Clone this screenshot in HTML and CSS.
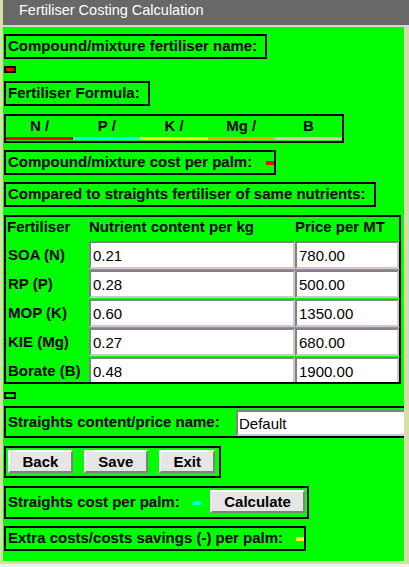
FILE: index.html
```html
<!DOCTYPE html>
<html lang="en">
<head>
<meta charset="utf-8">
<title>Fertiliser Costing Calculation</title>
<link rel="stylesheet" href="styles.css">
</head>
<body>
<div class="app">
  <div class="titlebar">Fertiliser Costing Calculation</div>
  <div class="panel">
    <div class="label-box">Compound/mixture fertiliser name:</div>
    <div class="swatch swatch-red gap-7"></div>
    <div class="label-box gap-8">Fertiliser Formula:</div>
    <div class="formula gap-8">
      <div class="fcell"><div class="fsym">N /</div><div class="bar bar-n"></div></div>
      <div class="fcell"><div class="fsym">P /</div><div class="bar bar-p"></div></div>
      <div class="fcell"><div class="fsym">K /</div><div class="bar bar-k"></div></div>
      <div class="fcell"><div class="fsym">Mg /</div><div class="bar bar-mg"></div></div>
      <div class="fcell"><div class="fsym">B</div><div class="bar bar-b"></div></div>
    </div>
    <div class="label-box with-dash gap-7">Compound/mixture cost per palm:<span class="dash dash-red"></span></div>
    <div class="label-box gap-7">Compared to straights fertiliser of same nutrients:</div>
    <div class="price-table gap-8">
      <div class="th th-first">Fertiliser</div>
      <div class="th">Nutrient content per kg</div>
      <div class="th">Price per MT</div>

      <div class="row-label">SOA (N)</div>
      <input class="num-input" type="text" value="0.21">
      <input class="num-input" type="text" value="780.00">

      <div class="row-label">RP (P)</div>
      <input class="num-input" type="text" value="0.28">
      <input class="num-input" type="text" value="500.00">

      <div class="row-label">MOP (K)</div>
      <input class="num-input" type="text" value="0.60">
      <input class="num-input" type="text" value="1350.00">

      <div class="row-label">KIE (Mg)</div>
      <input class="num-input" type="text" value="0.27">
      <input class="num-input" type="text" value="680.00">

      <div class="row-label">Borate (B)</div>
      <input class="num-input" type="text" value="0.48">
      <input class="num-input" type="text" value="1900.00">
    </div>
    <div class="swatch gap-8"></div>
    <div class="straights gap-7">
      <div class="straights-label">Straights content/price name:</div>
      <input class="name-input" type="text" value="Default">
    </div>
    <div class="actions gap-8">
      <button class="btn" type="button">Back</button>
      <button class="btn" type="button">Save</button>
      <button class="btn" type="button">Exit</button>
    </div>
    <div class="cost gap-8">
      <div class="cost-label">Straights cost per palm:<span class="dash dash-cyan"></span></div>
      <button class="btn btn-calc" type="button">Calculate</button>
    </div>
    <div class="label-box with-dash gap-7">Extra costs/costs savings (-) per palm:<span class="dash dash-yellow"></span></div>
  </div>
</div>
</body>
</html>
```
FILE: styles.css
```css
* {
  box-sizing: border-box;
}

html,
body {
  margin: 0;
  padding: 0;
}

body {
  background: #f1f1ea;
  font-family: "Liberation Sans", Arial, sans-serif;
  color: #000;
}

.app {
  width: 409px;
  background: #d5dfa6;
  padding: 0 0 3px 3px;
}

.titlebar {
  height: 27px;
  background: #686868;
  border-bottom: 2px solid #d6d6d6;
  color: #fff;
  font-size: 14.5px;
  line-height: 20px;
  padding-left: 16px;
  white-space: nowrap;
}

.panel {
  width: 401px;
  height: 534px;
  background: #00ff00;
  overflow: hidden;
  padding: 7px 0 0 1px;
  display: flex;
  flex-direction: column;
  align-items: flex-start;
}

.gap-7 {
  margin-top: 7px;
}

.gap-8 {
  margin-top: 8px;
}

.label-box {
  border: 2px solid #000;
  height: 25px;
  padding: 0 8px 2px 2px;
  font-weight: bold;
  font-size: 15px;
  line-height: 19px;
  white-space: nowrap;
}

.label-box.with-dash {
  padding-right: 0;
}

.dash {
  display: inline-block;
  width: 8px;
  height: 4px;
  margin-left: 13px;
  vertical-align: 2px;
}

.dash-red {
  background: #ff0000;
  margin-left: 14px;
}

.dash-cyan {
  background: #00ffff;
}

.dash-yellow {
  background: #ffff00;
}

.swatch {
  width: 12px;
  height: 7px;
  border: 2px solid #000;
}

.swatch-red {
  background: #ff0000;
}

.formula {
  border: 2px solid #000;
  height: 29px;
  display: grid;
  grid-template-columns: repeat(5, 67.2px);
}

.fsym {
  text-align: center;
  font-weight: bold;
  font-size: 15px;
  line-height: 20px;
  height: 20px;
}

.bar {
  height: 3px;
  margin-top: 1px;
}

.bar-n {
  background: #ff0000;
}

.bar-p {
  background: #00ffff;
}

.bar-k {
  background: #ffff00;
}

.bar-mg {
  background: #ffa500;
}

.bar-b {
  background: #ffb6c1;
}

.price-table {
  border: 2px solid #000;
  width: 397px;
  height: 169px;
  overflow: hidden;
  display: grid;
  grid-template-columns: 83px 206px 104px;
  grid-template-rows: 23px repeat(5, 28px);
  row-gap: 1px;
  font-weight: bold;
  font-size: 15px;
}

.th {
  line-height: 20px;
  white-space: nowrap;
}

.th-first {
  padding-left: 1px;
}

.row-label {
  align-self: center;
  line-height: 20px;
  padding-left: 2px;
  white-space: nowrap;
}

.num-input,
.name-input {
  display: block;
  margin: 0;
  border: 2px solid;
  border-color: #838383 #cacaca #cacaca #838383;
  background: #fff;
  color: #000;
  font-family: "Liberation Sans", Arial, sans-serif;
  font-size: 15px;
  font-weight: normal;
  padding: 0 2px;
  outline: none;
}

.num-input {
  width: 100%;
  height: 28px;
}

.straights {
  width: 420px;
  height: 32px;
  border: 2px solid #000;
  display: flex;
  align-items: flex-start;
  flex-shrink: 0;
}

.straights-label {
  flex: 0 0 230px;
  padding: 4px 0 0 2px;
  font-weight: bold;
  font-size: 15px;
  line-height: 20px;
  white-space: nowrap;
}

.name-input {
  flex: 0 0 200px;
  width: 200px;
  height: 26px;
  margin-top: 2px;
  padding-left: 1px;
}

.actions {
  border: 2px solid #000;
  display: flex;
  gap: 11px;
  padding: 2px 4px 3px 2px;
}

.btn {
  height: 23px;
  margin: 0;
  padding: 0 12.5px;
  border: 2px solid;
  border-color: #fafafa #808080 #808080 #fafafa;
  background: #e6e6e6;
  color: #000;
  font-family: "Liberation Sans", Arial, sans-serif;
  font-weight: bold;
  font-size: 15px;
  line-height: 19px;
}

.cost {
  border: 2px solid #000;
  display: flex;
  align-items: flex-start;
  padding: 2px 2px 4px 2px;
}

.cost-label {
  padding-top: 2px;
  font-weight: bold;
  font-size: 15px;
  line-height: 19px;
  white-space: nowrap;
}

.btn-calc {
  margin-left: 9px;
}
```
